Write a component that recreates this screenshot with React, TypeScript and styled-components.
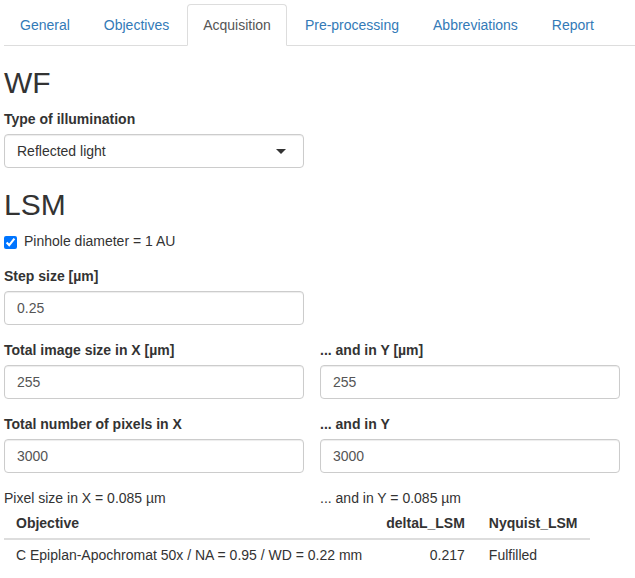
import React from 'react';
import styled, { createGlobalStyle, css } from 'styled-components';

const GlobalStyle = createGlobalStyle`
  * {
    box-sizing: border-box;
  }
  body {
    margin: 0;
    background: #fff;
    color: #333;
    font-family: 'Liberation Sans', Arial, Helvetica, sans-serif;
    font-size: 14px;
    line-height: 20px;
  }
`;

const Page = styled.div`
  padding: 4px 0 0 4px;
`;

const TabList = styled.ul`
  display: flex;
  margin: 0;
  padding: 0;
  list-style: none;
  border-bottom: 1px solid #ddd;
`;

const Tab = styled.li<{ $active?: boolean }>`
  margin: 0 2px -1px 0;
  padding: 10px 15px;
  line-height: 20px;
  border: 1px solid transparent;
  border-radius: 4px 4px 0 0;
  color: #337ab7;
  cursor: pointer;
  ${(p) =>
    p.$active &&
    css`
      color: #555;
      background: #fff;
      border-color: #ddd #ddd transparent;
      cursor: default;
    `}
`;

const Content = styled.div`
  display: block;
`;

const Heading = styled.h2`
  margin: 20px 0 10px;
  font-size: 30px;
  font-weight: 500;
  line-height: 1.1;
  color: #333;
`;

const FormGroup = styled.div`
  width: 300px;
  margin-bottom: 15px;
`;

const Label = styled.label`
  display: block;
  margin-bottom: 5px;
  font-weight: 700;
`;

const fieldBox = css`
  display: block;
  width: 100%;
  height: 34px;
  padding: 6px 12px;
  font-family: inherit;
  font-size: 14px;
  line-height: 20px;
  color: #555;
  background: #fff;
  border: 1px solid #ccc;
  border-radius: 4px;
  box-shadow: inset 0 1px 1px rgba(0, 0, 0, 0.075);
`;

const TextInput = styled.input`
  ${fieldBox}
  outline: none;
`;

const SelectBox = styled.div`
  ${fieldBox}
  display: flex;
  align-items: center;
  justify-content: space-between;
  padding-right: 17px;
  color: #333;
`;

const Caret = styled.span`
  width: 0;
  height: 0;
  border-style: solid;
  border-width: 5px 5px 0 5px;
  border-color: #333 transparent transparent transparent;
`;

const CheckRow = styled.label`
  display: flex;
  align-items: flex-start;
  margin: 0 0 15px;
  line-height: 20px;
  cursor: pointer;
`;

const CheckBox = styled.input`
  width: 13px;
  height: 13px;
  margin: 5px 7px 0 0;
`;

const Row = styled.div`
  display: grid;
  grid-template-columns: 316px 316px;
`;

const Note = styled.div`
  line-height: 20px;
`;

const Table = styled.table`
  border-collapse: collapse;
  border-spacing: 0;
`;

const Th = styled.th<{ $num?: boolean }>`
  padding: 5px 12px;
  font-weight: 700;
  text-align: ${(p) => (p.$num ? 'right' : 'left')};
  border-bottom: 2px solid #ddd;
  white-space: nowrap;
`;

const Td = styled.td<{ $num?: boolean }>`
  padding: 5px 12px;
  text-align: ${(p) => (p.$num ? 'right' : 'left')};
  white-space: nowrap;
`;

const tabs = ['General', 'Objectives', 'Acquisition', 'Pre-processing', 'Abbreviations', 'Report'];

const Field: React.FC<{ label: string; value: string }> = ({ label, value }) => (
  <FormGroup>
    <Label>{label}</Label>
    <TextInput type="text" defaultValue={value} />
  </FormGroup>
);

export default function App() {
  return (
    <Page>
      <GlobalStyle />
      <TabList>
        {tabs.map((t) => (
          <Tab key={t} $active={t === 'Acquisition'}>
            {t}
          </Tab>
        ))}
      </TabList>
      <Content>
        <Heading>WF</Heading>
        <FormGroup>
          <Label>Type of illumination</Label>
          <SelectBox>
            <span>Reflected light</span>
            <Caret />
          </SelectBox>
        </FormGroup>

        <Heading>LSM</Heading>
        <CheckRow>
          <CheckBox type="checkbox" defaultChecked />
          <span>Pinhole diameter = 1 AU</span>
        </CheckRow>
        <Field label="Step size [µm]" value="0.25" />
        <Row>
          <Field label="Total image size in X [µm]" value="255" />
          <Field label="... and in Y [µm]" value="255" />
        </Row>
        <Row>
          <Field label="Total number of pixels in X" value="3000" />
          <Field label="... and in Y" value="3000" />
        </Row>
        <Row>
          <Note>Pixel size in X = 0.085 µm</Note>
          <Note>... and in Y = 0.085 µm</Note>
        </Row>
        <Table>
          <thead>
            <tr>
              <Th>Objective</Th>
              <Th $num>deltaL_LSM</Th>
              <Th>Nyquist_LSM</Th>
            </tr>
          </thead>
          <tbody>
            <tr>
              <Td>C Epiplan-Apochromat 50x / NA = 0.95 / WD = 0.22 mm</Td>
              <Td $num>0.217</Td>
              <Td>Fulfilled</Td>
            </tr>
          </tbody>
        </Table>
      </Content>
    </Page>
  );
}
